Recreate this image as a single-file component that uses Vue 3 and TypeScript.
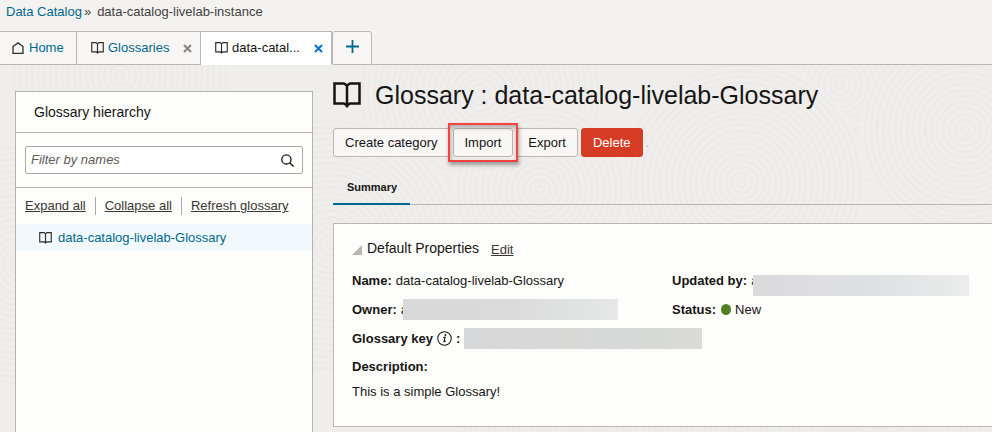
<script setup lang="ts">
import { ref, h } from 'vue'

const filter = ref('')

const BookIcon = () =>
  h('svg', { viewBox: '0 0 28 26', fill: 'none', stroke: 'currentColor', 'aria-hidden': 'true' }, [
    h('path', {
      d: 'M1.5 1.5H11L14 3.5L17 1.5H26.5V21.5H17L14 23.5L11 21.5H1.5ZM14 3.5V25.6',
      'stroke-width': 2.5,
    }),
  ])

interface Swirl { x: number; y: number; r: number }

const swirls: Swirl[] = [
  { x: 840, y: 20, r: 110 },
  { x: 480, y: 30, r: 120 },
  { x: 120, y: 10, r: 110 },
  { x: 330, y: 180, r: 130 },
  { x: 20, y: 200, r: 120 },
  { x: 600, y: 380, r: 140 },
  { x: 880, y: 330, r: 140 },
  { x: 965, y: 65, r: 105 },
  { x: 742, y: 118, r: 124 },
  { x: 540, y: 125, r: 88 },
]

const rings = (s: Swirl): number[] => {
  const list: number[] = []
  for (let r = 4; r < s.r; r += 6) list.push(r)
  return list
}
</script>

<template>
  <div class="page">
    <nav class="crumbs" aria-label="Breadcrumb">
      <a href="#">Data Catalog</a><span class="sep">»</span><span>data-catalog-livelab-instance</span>
    </nav>

    <div class="tabs">
      <div class="tab tab-home">
        <svg class="icon-home" viewBox="0 0 12 12" fill="none" stroke="currentColor" aria-hidden="true">
          <path d="M1 11.4V4.6L6 .9L11 4.6V11.4Z" stroke-width="1.3" />
        </svg>
        <a href="#">Home</a>
      </div>
      <div class="tab tab-list">
        <BookIcon class="icon-book" />
        <a href="#">Glossaries</a>
        <button class="close" aria-label="Close Glossaries">
          <svg viewBox="0 0 9 9" aria-hidden="true"><path d="M1 1L8 8M8 1L1 8" stroke="currentColor" stroke-width="2" /></svg>
        </button>
      </div>
      <div class="tab tab-active">
        <BookIcon class="icon-book" />
        <a href="#" aria-current="page">data-catal...</a>
        <button class="close" aria-label="Close data-catalog-livelab-Glossary">
          <svg viewBox="0 0 9 9" aria-hidden="true"><path d="M1 1L8 8M8 1L1 8" stroke="currentColor" stroke-width="2" /></svg>
        </button>
      </div>
      <button class="tab-add" aria-label="Add tab">
        <svg viewBox="0 0 13 13" aria-hidden="true"><path d="M6.5 0V13M0 6.5H13" stroke="currentColor" stroke-width="1.8" /></svg>
      </button>
      <div class="tab-fill"></div>
    </div>

    <div class="body">
      <svg class="texture" aria-hidden="true" width="100%" height="100%">
        <g v-for="(s, i) in swirls" :key="i">
          <circle :cx="s.x" :cy="s.y" :r="s.r" fill="#efeeec" />
          <circle v-for="r in rings(s)" :key="r" :cx="s.x" :cy="s.y" :r="r" fill="none" stroke="#ebeae8" stroke-width="2" />
        </g>
      </svg>

      <aside class="side">
        <h2>Glossary hierarchy</h2>
        <div class="search">
          <div class="field">
            <input v-model="filter" type="text" placeholder="Filter by names" aria-label="Filter by names" />
            <button aria-label="Search">
              <svg viewBox="0 0 13 13" fill="none" stroke="currentColor" aria-hidden="true">
                <circle cx="5.4" cy="5.4" r="4.6" stroke-width="1.3" />
                <path d="M8.7 8.7L12.5 12.4" stroke-width="1.4" />
              </svg>
            </button>
          </div>
        </div>
        <div class="links">
          <a href="#">Expand all</a>
          <a href="#">Collapse all</a>
          <a href="#">Refresh glossary</a>
        </div>
        <a class="node" href="#">
          <BookIcon class="icon-book" />data-catalog-livelab-Glossary
        </a>
      </aside>

      <main>
        <header class="title">
          <BookIcon class="icon-title" />
          <h1>Glossary : data-catalog-livelab-Glossary</h1>
        </header>
        <div class="actions">
          <button class="btn">Create category</button>
          <div class="marked"><button class="btn">Import</button></div>
          <button class="btn">Export</button>
          <button class="btn danger">Delete</button>
          <span class="dot">.</span>
        </div>
        <div class="subtabs">
          <a href="#">Summary</a>
        </div>

        <section class="card">
          <div class="card-head">
            <button class="toggle" aria-label="Collapse Default Properties">
              <svg viewBox="0 0 10 10" aria-hidden="true"><path d="M10 0V10H0Z" fill="currentColor" /></svg>
            </button>
            <h3>Default Properties</h3>
            <a href="#">Edit</a>
          </div>
          <div class="props">
            <dl>
              <div class="row"><dt>Name:</dt><dd>data-catalog-livelab-Glossary</dd></div>
              <div class="row"><dt>Owner:</dt><dd class="hidden">a<span class="mask mask-owner"></span></dd></div>
              <div class="row">
                <dt class="key">
                  Glossary key
                  <svg viewBox="0 0 16 16" fill="none" aria-hidden="true">
                    <circle cx="8" cy="8" r="7.2" stroke="currentColor" stroke-width="1.1" />
                    <path d="M6.6 6.9L8.6 6.6L7.5 11.2Q7.6 11.8 9.2 10.7" stroke="currentColor" stroke-width="1.2" />
                    <circle cx="8.9" cy="4.3" r="1" fill="currentColor" />
                  </svg>
                  :
                </dt>
                <dd class="hidden"><span class="mask mask-key"></span></dd>
              </div>
              <div class="row desc"><dt>Description:</dt><dd>This is a simple Glossary!</dd></div>
            </dl>
            <dl>
              <div class="row"><dt>Updated by:</dt><dd class="hidden">a<span class="mask mask-user"></span></dd></div>
              <div class="row"><dt>Status:</dt><dd class="status"><i></i>New</dd></div>
            </dl>
          </div>
        </section>
      </main>
    </div>
  </div>
</template>

<style>
body {
  background: #f4f3f1;
}
</style>

<style scoped>
* {
  box-sizing: border-box;
}
.page {
  display: flex;
  flex-direction: column;
  height: 100vh;
  overflow: hidden;
  background: #f3f2f0;
  color: #161513;
  font: 13px/16px "Liberation Sans", Arial, sans-serif;
}
a {
  color: #00688c;
  text-decoration: none;
}
svg {
  display: block;
  flex: none;
}
button {
  margin: 0;
  padding: 0;
  border: 0;
  background: none;
  color: inherit;
  font: inherit;
}
h1, h2, h3, dl, dd {
  margin: 0;
  font-weight: 400;
}

.crumbs {
  display: flex;
  height: 31px;
  padding: 4px 6px;
  color: #45413e;
}
.sep {
  padding: 0 6px 0 2px;
}

.tabs {
  display: flex;
  flex: none;
  height: 34px;
}
.tab {
  display: flex;
  align-items: center;
  border: solid #bcb6b1;
  border-width: 1px 1px 1px 0;
  background: #f7f6f4;
  color: #312d2a;
}
.tab-home {
  width: 77px;
  padding-left: 12px;
  gap: 5px;
}
.tab-list {
  width: 124px;
  padding: 0 8px 0 14px;
  gap: 4px;
}
.tab-active {
  width: 131px;
  padding: 0 8px 0 14px;
  gap: 4px;
  border-bottom-color: #fff;
  background: #fff;
}
.tab-active a {
  color: #161513;
}
.icon-home {
  width: 12px;
  height: 12px;
}
.icon-book {
  width: 13px;
  height: 12px;
}
.close {
  margin-left: auto;
  color: #8b8580;
}
.close svg {
  width: 9px;
  height: 9px;
}
.tab-active .close {
  color: #0572ce;
}
.tab-add {
  display: grid;
  place-items: center;
  width: 40px;
  padding-bottom: 4px;
  border: 1px solid #bcb6b1;
  border-radius: 3px 3px 0 0;
  background: #f7f6f4;
  color: #00688c;
}
.tab-add svg {
  width: 13px;
  height: 13px;
}
.tab-fill {
  flex: 1;
  border-bottom: 1px solid #bcb6b1;
}

.body {
  position: relative;
  display: flex;
  flex: 1;
  gap: 20px;
  min-height: 0;
  padding-left: 15px;
  background: #efeeec;
}
.texture {
  position: absolute;
  inset: 0;
}

.side {
  position: relative;
  flex: none;
  width: 298px;
  margin-top: 26px;
  border: 1px solid #b7b1ac;
  border-bottom: 0;
  background: #fdfdfc;
}
.side h2 {
  padding: 12px 18px;
  border-bottom: 1px solid #b7b1ac;
  font-size: 14px;
  line-height: 16px;
}
.search {
  padding: 13px 9px;
  border-bottom: 1px solid #b7b1ac;
}
.field {
  display: flex;
  align-items: center;
  height: 28px;
  padding: 0 8px 0 5px;
  border: 1px solid #aea8a2;
  border-radius: 2px;
  background: #fff;
}
.field input {
  flex: 1;
  min-width: 0;
  padding: 0;
  border: 0;
  outline: 0;
  background: none;
  font: inherit;
}
.field input::placeholder {
  color: #5f5a56;
  font-style: italic;
}
.field svg {
  width: 13px;
  height: 13px;
}
.links {
  display: flex;
  padding: 9px;
}
.links a {
  padding: 1px 9px;
  border-left: 1px solid #aea8a2;
  color: #3a3632;
  text-decoration: underline;
}
.links a:first-child {
  padding-left: 0;
  border-left: 0;
}
.node {
  display: flex;
  align-items: center;
  gap: 6px;
  height: 27px;
  padding-left: 23px;
  background: #f2f9fd;
}
.node svg {
  color: #312d2a;
}

main {
  position: relative;
  flex: 1;
  min-width: 0;
}
.title {
  display: flex;
  align-items: center;
  gap: 14px;
  padding-top: 16px;
}
.icon-title {
  width: 28px;
  height: 26px;
}
.title h1 {
  font-size: 25px;
  line-height: 28px;
}
.actions {
  display: flex;
  gap: 3px;
  padding-top: 19px;
}
.btn {
  height: 29px;
  padding: 0 11px;
  border: 1px solid #bcb6b1;
  border-radius: 3px;
  background: #f8f7f5;
}
.danger {
  border-color: #d63b25;
  background: #d63b25;
  color: #fff;
}
.marked {
  position: relative;
}
.marked::after {
  content: "";
  position: absolute;
  inset: -5px;
  border: 2px solid #f8423f;
  box-shadow: 1px 3px 4px rgba(0, 0, 0, 0.35), inset 1px 3px 4px rgba(0, 0, 0, 0.25);
  pointer-events: none;
}
.dot {
  align-self: center;
  color: #b8b4b0;
}
.subtabs {
  display: flex;
  margin-top: 12px;
  border-bottom: 1px solid #bcb6b1;
}
.subtabs a {
  margin-bottom: -1px;
  padding: 10px 13px 8px 14px;
  border-bottom: 2px solid #00688c;
  color: #161513;
  font-size: 11px;
  font-weight: 700;
  line-height: 16px;
}

.card {
  margin-top: 18px;
  padding: 14px 0 26px 18px;
  border: solid #bcb6b1;
  border-width: 1px 0 1px 1px;
  background: #fdfdfb;
  white-space: nowrap;
}
.card-head {
  display: flex;
  align-items: center;
  gap: 12px;
}
.card-head h3 {
  margin-left: -7px;
  font-size: 14px;
  line-height: 16px;
}
.card-head a {
  padding-top: 4px;
  color: #3a3632;
  text-decoration: underline;
}
.toggle {
  padding-top: 4px;
  color: #bcb6b1;
}
.toggle svg {
  width: 10px;
  height: 10px;
}
.props {
  display: grid;
  grid-template-columns: repeat(2, minmax(0, 1fr));
  padding-top: 8px;
}
.row {
  display: flex;
  align-items: center;
  gap: 4px;
  height: 29px;
}
dt {
  font-weight: 700;
}
.key {
  display: flex;
  align-items: center;
  gap: 4px;
}
.key svg {
  width: 15px;
  height: 15px;
}
.hidden {
  display: flex;
  align-items: center;
}
.mask {
  position: relative;
  height: 21px;
}
.mask-owner {
  width: 215px;
  margin-left: -5px;
  background: linear-gradient(90deg, #d9d9da, #dadada 50%, #e6e7e7);
}
.mask-key {
  width: 238px;
  background: linear-gradient(90deg, #d6d7d8, #d9d8d8 35%, #d6d9d7 70%, #dadad7);
}
.mask-user {
  width: 216px;
  margin: 10px 0 0 -5px;
  background: linear-gradient(90deg, #dadadc, #dddde2 30%, #dde1e2 55%, #ebecec);
}
.desc {
  flex-direction: column;
  align-items: flex-start;
  gap: 9px;
  height: auto;
  padding-top: 6px;
}
.status {
  display: flex;
  align-items: center;
  gap: 4px;
}
.status i {
  width: 10px;
  height: 11px;
  margin-left: 1px;
  border-radius: 50%;
  background: #508223;
}
</style>
